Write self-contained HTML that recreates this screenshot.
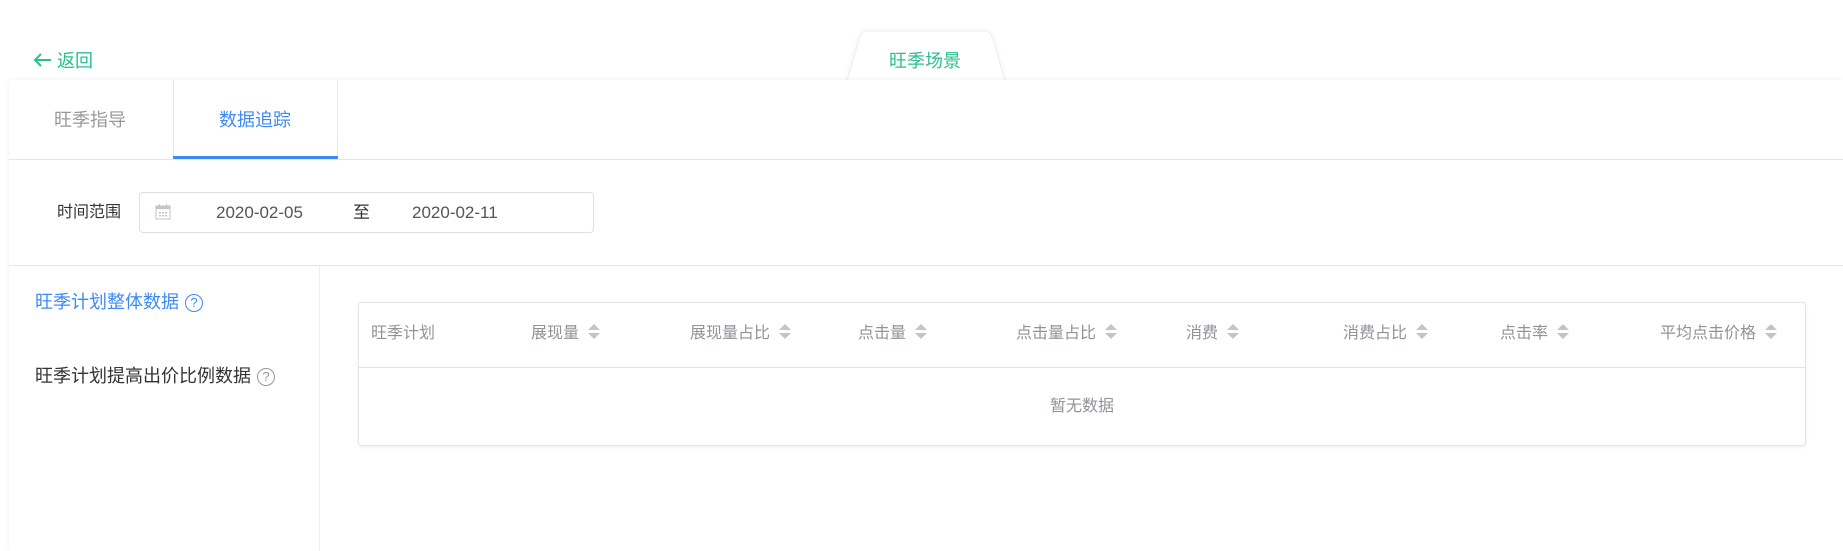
<!DOCTYPE html>
<html><head><meta charset="utf-8"><style>
*{margin:0;padding:0;box-sizing:border-box}
body{width:1843px;height:551px;background:#fff;position:relative;overflow:hidden;font-family:"Liberation Sans","Noto Sans CJK SC",sans-serif}
.a{position:absolute;white-space:nowrap;line-height:1}
.card{position:absolute;left:9px;top:80px;width:1834px;height:471px;background:#fff;box-shadow:0 0 6px rgba(0,0,0,.06)}
.hl{position:absolute;height:1px;background:#e6e6ea}
.sort{display:inline-block;vertical-align:middle;margin-left:9px;width:12px;height:16px;position:relative;top:-2px}
.sort:before{content:"";position:absolute;left:0;top:0;border-left:6px solid transparent;border-right:6px solid transparent;border-bottom:6px solid #c0c4cc}
.sort:after{content:"";position:absolute;left:0;top:9px;border-left:6px solid transparent;border-right:6px solid transparent;border-top:6px solid #c0c4cc}
.th{position:absolute;top:325px;font-size:16px;color:#909399;line-height:18px;white-space:nowrap}
.q{display:inline-block;width:18px;height:18px;border:1.5px solid currentColor;border-radius:50%;font-size:13px;line-height:15px;text-align:center;vertical-align:top;margin-left:6px;position:relative;top:1px}
</style></head><body>
<svg style="position:absolute;left:32px;top:52px" width="20" height="16"><path d="M19 8 H3 M9 2 L3 8 L9 14" fill="none" stroke="#2bbf8a" stroke-width="2"/></svg>
<div class="a" style="left:57px;top:52px;font-size:18px;color:#2bbf8a">返回</div>
<svg style="position:absolute;left:840px;top:28px" width="172" height="54"><path d="M7 53 L20 8 Q22 3 28 3 L144 3 Q150 3 152 8 L165 53" fill="#fff" stroke="#eee" stroke-width="1" style="filter:drop-shadow(0 0 3px rgba(0,0,0,.05))"/></svg>
<div class="a" style="left:889px;top:52px;font-size:18px;color:#2bbf8a">旺季场景</div>
<div class="card"></div>
<div class="a" style="left:54px;top:111px;font-size:18px;color:#999">旺季指导</div>
<div style="position:absolute;left:173px;top:80px;width:165px;height:79px;border-left:1px solid #e6e6ea;border-right:1px solid #e6e6ea"></div>
<div class="a" style="left:219px;top:111px;font-size:18px;color:#3d8af7">数据追踪</div>
<div class="hl" style="left:9px;top:159px;width:1834px"></div>
<div style="position:absolute;left:173px;top:156px;width:165px;height:3px;background:#3d8af7"></div>
<div class="a" style="left:57px;top:205px;font-size:16px;color:#333">时间范围</div>
<div style="position:absolute;left:139px;top:192px;width:455px;height:41px;border:1px solid #dcdfe6;border-radius:4px"></div>
<svg style="position:absolute;left:155px;top:203px" width="16" height="17"><rect x="1" y="3" width="14" height="13" fill="none" stroke="#c0c4cc"/><rect x="1" y="3" width="14" height="3" fill="#c0c4cc"/><g fill="#c0c4cc"><rect x="4" y="9" width="2" height="1.5"/><rect x="7" y="9" width="2" height="1.5"/><rect x="10" y="9" width="2" height="1.5"/><rect x="4" y="12" width="2" height="1.5"/><rect x="7" y="12" width="2" height="1.5"/><rect x="10" y="12" width="2" height="1.5"/></g><rect x="4" y="1" width="1" height="3" fill="#c0c4cc"/><rect x="11" y="1" width="1" height="3" fill="#c0c4cc"/></svg>
<div class="a" style="left:216px;top:204px;font-size:17px;color:#555">2020-02-05</div>
<div class="a" style="left:353px;top:204px;font-size:17px;color:#333">至</div>
<div class="a" style="left:412px;top:204px;font-size:17px;color:#555">2020-02-11</div>
<div class="hl" style="left:9px;top:265px;width:1834px"></div>
<div style="position:absolute;left:319px;top:266px;width:1px;height:285px;background:#eeeef2"></div>
<div class="a" style="left:35px;top:293px;font-size:18px;color:#3d8af7">旺季计划整体数据<span class="q">?</span></div>
<div class="a" style="left:35px;top:367px;font-size:18px;color:#333">旺季计划提高出价比例数据<span class="q" style="color:#999">?</span></div>
<div style="position:absolute;left:358px;top:302px;width:1448px;height:144px;border:1px solid #e4e4ee;border-radius:4px;box-shadow:0 1px 3px rgba(0,0,0,.08)"></div>
<div class="hl" style="left:359px;top:367px;width:1446px;background:#e0e0ea"></div>
<div class="th" style="left:371px">旺季计划</div>
<div class="th" style="left:531px">展现量<i class="sort"></i></div>
<div class="th" style="left:690px">展现量占比<i class="sort"></i></div>
<div class="th" style="left:858px">点击量<i class="sort"></i></div>
<div class="th" style="left:1016px">点击量占比<i class="sort"></i></div>
<div class="th" style="left:1186px">消费<i class="sort"></i></div>
<div class="th" style="left:1343px">消费占比<i class="sort"></i></div>
<div class="th" style="left:1500px">点击率<i class="sort"></i></div>
<div class="th" style="left:1660px">平均点击价格<i class="sort"></i></div>
<div class="a" style="left:1050px;top:399px;font-size:16px;color:#909399">暂无数据</div>
</body></html>
